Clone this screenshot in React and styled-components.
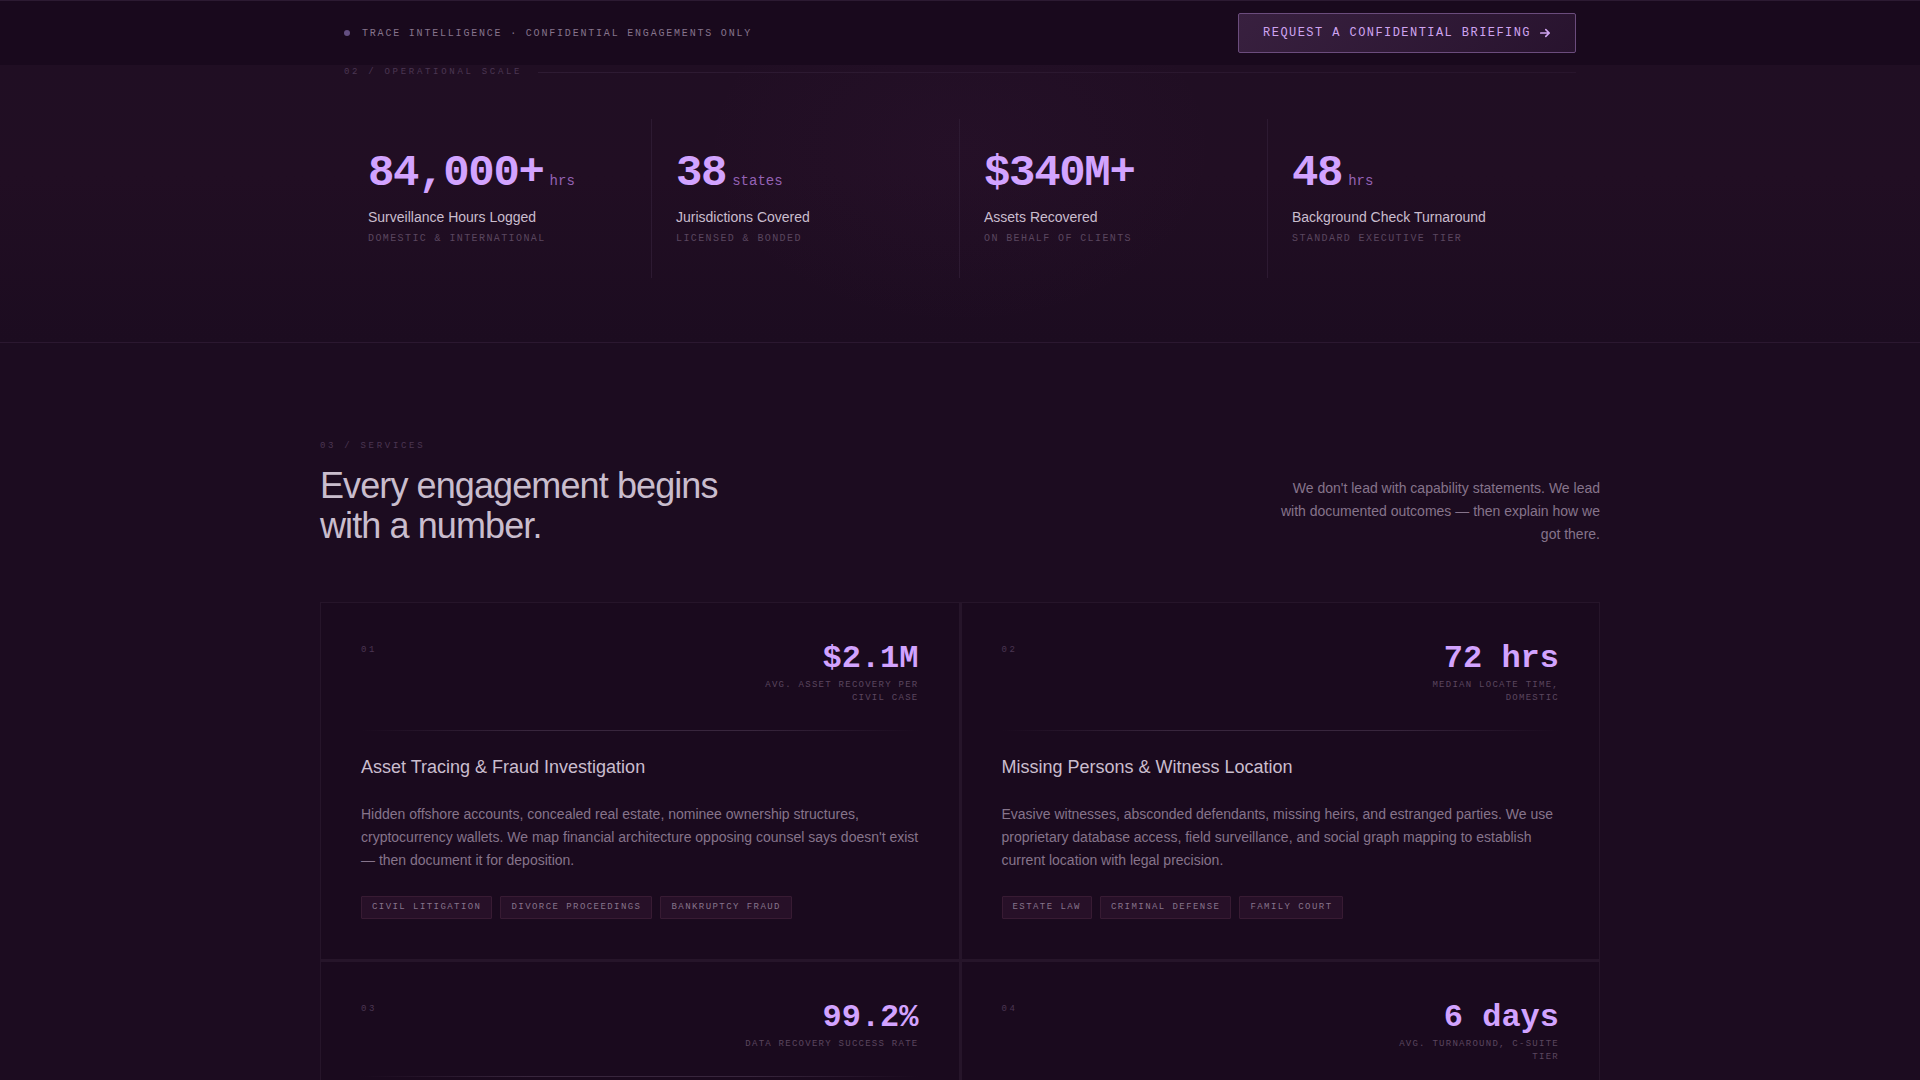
import styled, { createGlobalStyle } from "styled-components";

const SANS = `"Liberation Sans", Arial, sans-serif`;
const MONO = `"Liberation Mono", "Courier New", monospace`;

const STATS = [
  {
    value: "84,000+",
    unit: "hrs",
    label: "Surveillance Hours Logged",
    note: "Domestic & International",
  },
  {
    value: "38",
    unit: "states",
    label: "Jurisdictions Covered",
    note: "Licensed & Bonded",
  },
  {
    value: "$340M+",
    label: "Assets Recovered",
    note: "On Behalf of Clients",
  },
  {
    value: "48",
    unit: "hrs",
    label: "Background Check Turnaround",
    note: "Standard Executive Tier",
  },
];

const SERVICES = [
  {
    index: "01",
    metric: "$2.1M",
    metricLabel: "Avg. asset recovery per civil case",
    title: "Asset Tracing & Fraud Investigation",
    body: "Hidden offshore accounts, concealed real estate, nominee ownership structures, cryptocurrency wallets. We map financial architecture opposing counsel says doesn't exist — then document it for deposition.",
    tags: ["Civil Litigation", "Divorce Proceedings", "Bankruptcy Fraud"],
  },
  {
    index: "02",
    metric: "72 hrs",
    metricLabel: "Median locate time, domestic",
    title: "Missing Persons & Witness Location",
    body: "Evasive witnesses, absconded defendants, missing heirs, and estranged parties. We use proprietary database access, field surveillance, and social graph mapping to establish current location with legal precision.",
    tags: ["Estate Law", "Criminal Defense", "Family Court"],
  },
  {
    index: "03",
    metric: "99.2%",
    metricLabel: "Data recovery success rate",
  },
  {
    index: "04",
    metric: "6 days",
    metricLabel: "Avg. turnaround, C-suite tier",
  },
];

function App() {
  return (
    <>
      <GlobalStyle />
      <Page>
        <TopBar>
          <TopBarInner>
            <Brand>
              <Dot />
              Trace Intelligence · Confidential Engagements Only
            </Brand>
            <BriefingButton type="button">
              Request a Confidential Briefing
              <ArrowIcon />
            </BriefingButton>
          </TopBarInner>
        </TopBar>
        <main>
          <ScaleSection>
            <ScaleInner>
              <ScaleHeader>
                <Eyebrow>02 / Operational Scale</Eyebrow>
                <HeaderRule />
              </ScaleHeader>
              <StatGrid>
                {STATS.map((stat) => (
                  <Stat key={stat.label}>
                    <StatValue>
                      {stat.value}
                      {stat.unit && <Unit>{stat.unit}</Unit>}
                    </StatValue>
                    <StatLabel>{stat.label}</StatLabel>
                    <StatNote>{stat.note}</StatNote>
                  </Stat>
                ))}
              </StatGrid>
            </ScaleInner>
          </ScaleSection>
          <ServicesSection>
            <ServicesHeader>
              <div>
                <Eyebrow>03 / Services</Eyebrow>
                <Heading>
                  Every engagement begins
                  <br />
                  with a number.
                </Heading>
              </div>
              <Intro>
                We don't lead with capability statements. We lead with
                documented outcomes — then explain how we got there.
              </Intro>
            </ServicesHeader>
            <CardGrid>
              {SERVICES.map((service) => (
                <ServiceCard key={service.index} service={service} />
              ))}
            </CardGrid>
          </ServicesSection>
        </main>
      </Page>
    </>
  );
}

function ServiceCard({ service }) {
  return (
    <Card>
      <CardTop>
        <CardIndex>{service.index}</CardIndex>
        <div>
          <Metric>{service.metric}</Metric>
          <MetricLabel>{service.metricLabel}</MetricLabel>
        </div>
      </CardTop>
      <CardRule />
      {service.title && <CardTitle>{service.title}</CardTitle>}
      {service.body && <CardBody>{service.body}</CardBody>}
      {service.tags && (
        <TagList>
          {service.tags.map((tag) => (
            <Tag key={tag}>{tag}</Tag>
          ))}
        </TagList>
      )}
    </Card>
  );
}

function ArrowIcon() {
  return (
    <svg width="12" height="12" viewBox="0 0 12 12" fill="none" aria-hidden="true">
      <path
        d="M1.8 6h8.4M6.8 2.6L10.2 6 6.8 9.4"
        stroke="currentColor"
        strokeWidth="1.7"
        strokeLinecap="round"
        strokeLinejoin="round"
      />
    </svg>
  );
}

const GlobalStyle = createGlobalStyle`
  * {
    box-sizing: border-box;
    margin: 0;
    padding: 0;
  }

  body {
    background-color: #1c0c20;
    font-family: ${SANS};
    line-height: 1.5;
  }
`;

const Page = styled.div`
  height: 100vh;
  overflow: hidden;
`;

const TopBar = styled.header`
  padding: 12px 0;
  border-top: 1px solid #2c1a32;
  background-color: #19091d;
`;

const TopBarInner = styled.div`
  display: flex;
  align-items: center;
  justify-content: space-between;
  max-width: 1280px;
  margin: 0 auto;
  padding: 0 24px;
`;

const Brand = styled.div`
  display: flex;
  align-items: center;
  gap: 12px;
  color: #86748c;
  font-family: ${MONO};
  font-size: 10px;
  letter-spacing: 0.18em;
  text-transform: uppercase;
`;

const Dot = styled.span`
  width: 6px;
  height: 6px;
  border-radius: 50%;
  background-color: #644f82;
`;

const BriefingButton = styled.button`
  display: flex;
  align-items: center;
  gap: 8px;
  height: 40px;
  padding: 0 24px;
  border: 1px solid #6b4c7d;
  border-radius: 2px;
  background: linear-gradient(135deg, #38203f 0%, #28132e 100%);
  color: #cfa4f0;
  font-family: ${MONO};
  font-size: 12px;
  letter-spacing: 0.12em;
  text-transform: uppercase;
  cursor: pointer;
`;

const ScaleSection = styled.section`
  border-bottom: 1px solid #2b1830;
  background:
    radial-gradient(ellipse 260px 180px at 50% 30%, rgba(130, 60, 140, 0.04), transparent),
    linear-gradient(180deg, #200e23 0%, #210e23 40%, #1c0c20 100%);
`;

const ScaleInner = styled.div`
  max-width: 1280px;
  margin: 0 auto;
  padding: 0 24px 64px;
`;

const ScaleHeader = styled.div`
  display: flex;
  align-items: center;
  gap: 16px;
  margin-bottom: 40px;
`;

const Eyebrow = styled.p`
  color: #4b3652;
  font-family: ${MONO};
  font-size: 9px;
  line-height: 14px;
  letter-spacing: 0.3em;
  text-transform: uppercase;
`;

const HeaderRule = styled.div`
  flex: 1;
  height: 1px;
  background: linear-gradient(90deg, #2e1b33, #28152c);
`;

const StatGrid = styled.div`
  display: grid;
  grid-template-columns: repeat(4, 1fr);
`;

const Stat = styled.div`
  padding: 32px 24px;
  border-right: 1px solid #2d1a32;

  &:last-child {
    border-right: 0;
  }
`;

const StatValue = styled.div`
  color: #d2a3ff;
  font-family: ${MONO};
  font-size: 44px;
  font-weight: 700;
  line-height: 44px;
  letter-spacing: -0.03em;
`;

const Unit = styled.span`
  margin-left: 6px;
  color: #9562b5;
  font-size: 14px;
  font-weight: 400;
  line-height: 14px;
  letter-spacing: 0;
`;

const StatLabel = styled.div`
  margin-top: 12px;
  color: #cabdce;
  font-size: 14px;
  line-height: 21px;
`;

const StatNote = styled.div`
  margin-top: 3px;
  color: #5a465f;
  font-family: ${MONO};
  font-size: 10px;
  line-height: 15px;
  letter-spacing: 0.14em;
  text-transform: uppercase;
`;

const ServicesSection = styled.section`
  max-width: 1280px;
  margin: 0 auto;
  padding: 96px 0;
`;

const ServicesHeader = styled.div`
  display: flex;
  align-items: flex-end;
  justify-content: space-between;
  margin-bottom: 56px;
`;

const Heading = styled.h2`
  margin-top: 13px;
  color: #c9bdcd;
  font-size: 36px;
  font-weight: 400;
  line-height: 40px;
  letter-spacing: -0.025em;
`;

const Intro = styled.p`
  max-width: 320px;
  color: #86748b;
  font-size: 14px;
  line-height: 23px;
  text-align: right;
`;

const CardGrid = styled.div`
  display: grid;
  grid-template-columns: repeat(2, 1fr);
  gap: 1px;
  background-color: #26152a;
`;

const Card = styled.article`
  padding: 40px;
  border: 1px solid #26152a;
  background-color: #1a0a1e;
`;

const CardTop = styled.div`
  display: flex;
  justify-content: space-between;
  margin-bottom: 25px;
`;

const CardIndex = styled.span`
  color: #4b3652;
  font-family: ${MONO};
  font-size: 9px;
  line-height: 14px;
  letter-spacing: 0.3em;
`;

const Metric = styled.div`
  color: #d2a3ff;
  font-family: ${MONO};
  font-size: 32px;
  font-weight: 700;
  line-height: 32px;
  text-align: right;
`;

const MetricLabel = styled.div`
  max-width: 180px;
  margin-top: 4px;
  margin-left: auto;
  color: #5a465f;
  font-family: ${MONO};
  font-size: 9px;
  line-height: 13px;
  letter-spacing: 0.14em;
  text-align: right;
  text-transform: uppercase;
`;

const CardRule = styled.div`
  height: 1px;
  background: linear-gradient(90deg, transparent, #38263d 30%, #38263d 70%, transparent);
`;

const CardTitle = styled.h3`
  margin-top: 24px;
  color: #cabdce;
  font-size: 18px;
  font-weight: 400;
  line-height: 24px;
`;

const CardBody = styled.p`
  margin-top: 24px;
  color: #86748b;
  font-size: 14px;
  line-height: 23px;
`;

const TagList = styled.ul`
  display: flex;
  flex-wrap: wrap;
  gap: 8px;
  margin-top: 24px;
  list-style: none;
`;

const Tag = styled.li`
  padding: 4px 10px;
  border: 1px solid #381b33;
  border-radius: 1px;
  background-color: #271028;
  color: #86748b;
  font-family: ${MONO};
  font-size: 9px;
  line-height: 13px;
  letter-spacing: 0.16em;
  text-transform: uppercase;
`;

export default App;
